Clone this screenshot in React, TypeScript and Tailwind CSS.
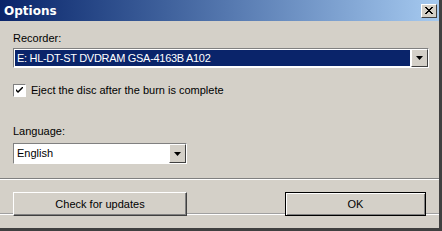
export default function App() {
  return (
    <div className="w-[442px] h-[231px] bg-[#d4d0c8] flex flex-col border-r-[3px] border-b-[3px] border-r-[#404040] border-b-[#404040] text-[11px] text-black" style={{ fontFamily: '"Liberation Sans", Arial, sans-serif' }}>
      <div className="h-[21px] flex items-center justify-between pl-[4px] pr-[2px] bg-gradient-to-r from-[#0a246a] to-[#a6caf0]">
        <span className="text-white font-bold text-[12px]" style={{ fontFamily: '"DejaVu Sans", sans-serif' }}>Options</span>
        <div className="w-[16px] h-[14px] bg-[#d4d0c8] border border-t-white border-l-white border-r-[#404040] border-b-[#404040] flex items-center justify-center">
          <svg width="8" height="7" viewBox="0 0 8 7">
            <path d="M0 0 L7 7 M1 0 L8 7 M7 0 L0 7 M8 0 L1 7" stroke="black" strokeWidth="1" />
          </svg>
        </div>
      </div>
      <div className="flex-1 flex flex-col px-[13px] pt-[10px]">
        <div className="leading-[14px]">Recorder:</div>
        <div className="mt-[3px] h-[20px] w-[416px] flex border border-t-[#808080] border-l-[#808080] border-r-white border-b-white">
          <div className="flex-1 flex items-center bg-white p-[1px]">
            <div className="flex-1 h-full bg-[#0a246a] text-white pl-[2px] flex items-center tracking-[-0.3px]">E: HL-DT-ST DVDRAM GSA-4163B A102</div>
          </div>
          <DropButton />
        </div>
        <label className="mt-[16px] h-[13px] flex items-center gap-[5px]">
          <div className="w-[13px] h-[13px] bg-white border border-t-[#808080] border-l-[#808080] border-r-white border-b-white flex items-center justify-center">
            <svg width="7" height="7" viewBox="0 0 7 7">
              <path d="M0 2 L0 4 L2 6 L7 1 L7 -1 L2 4 Z" fill="black" />
            </svg>
          </div>
          <span>Eject the disc after the burn is complete</span>
        </label>
        <div className="mt-[27px] leading-[14px]">Language:</div>
        <div className="mt-[5px] h-[21px] w-[174px] flex border border-t-[#808080] border-l-[#808080] border-r-white border-b-white">
          <div className="flex-1 flex items-center bg-white pl-[3px]">English</div>
          <DropButton />
        </div>
      </div>
      <div className="border-t border-t-[#808080] border-b border-b-white" />
      <div className="relative flex justify-between px-[13px] pt-[12px] pb-[12px]">
        <div className="absolute left-0 right-0 top-[33px] border-t border-t-[#a0a0a0] border-b border-b-white" />
        <button className="relative w-[174px] h-[24px] bg-[#d4d0c8] border border-t-white border-l-white border-r-[#404040] border-b-[#404040] shadow-[inset_-1px_-1px_0_#808080]">Check for updates</button>
        <button className="relative w-[141px] h-[24px] bg-[#d4d0c8] border border-black shadow-[inset_1px_1px_0_white,inset_-1px_-1px_0_#808080]">OK</button>
      </div>
    </div>
  );
}

function DropButton() {
  return (
    <div className="w-[17px] h-full bg-[#d4d0c8] border border-t-white border-l-white border-r-[#404040] border-b-[#404040] flex items-center justify-center">
      <svg width="7" height="4" viewBox="0 0 7 4">
        <path d="M0 0 L7 0 L3.5 4 Z" fill="black" />
      </svg>
    </div>
  );
}
